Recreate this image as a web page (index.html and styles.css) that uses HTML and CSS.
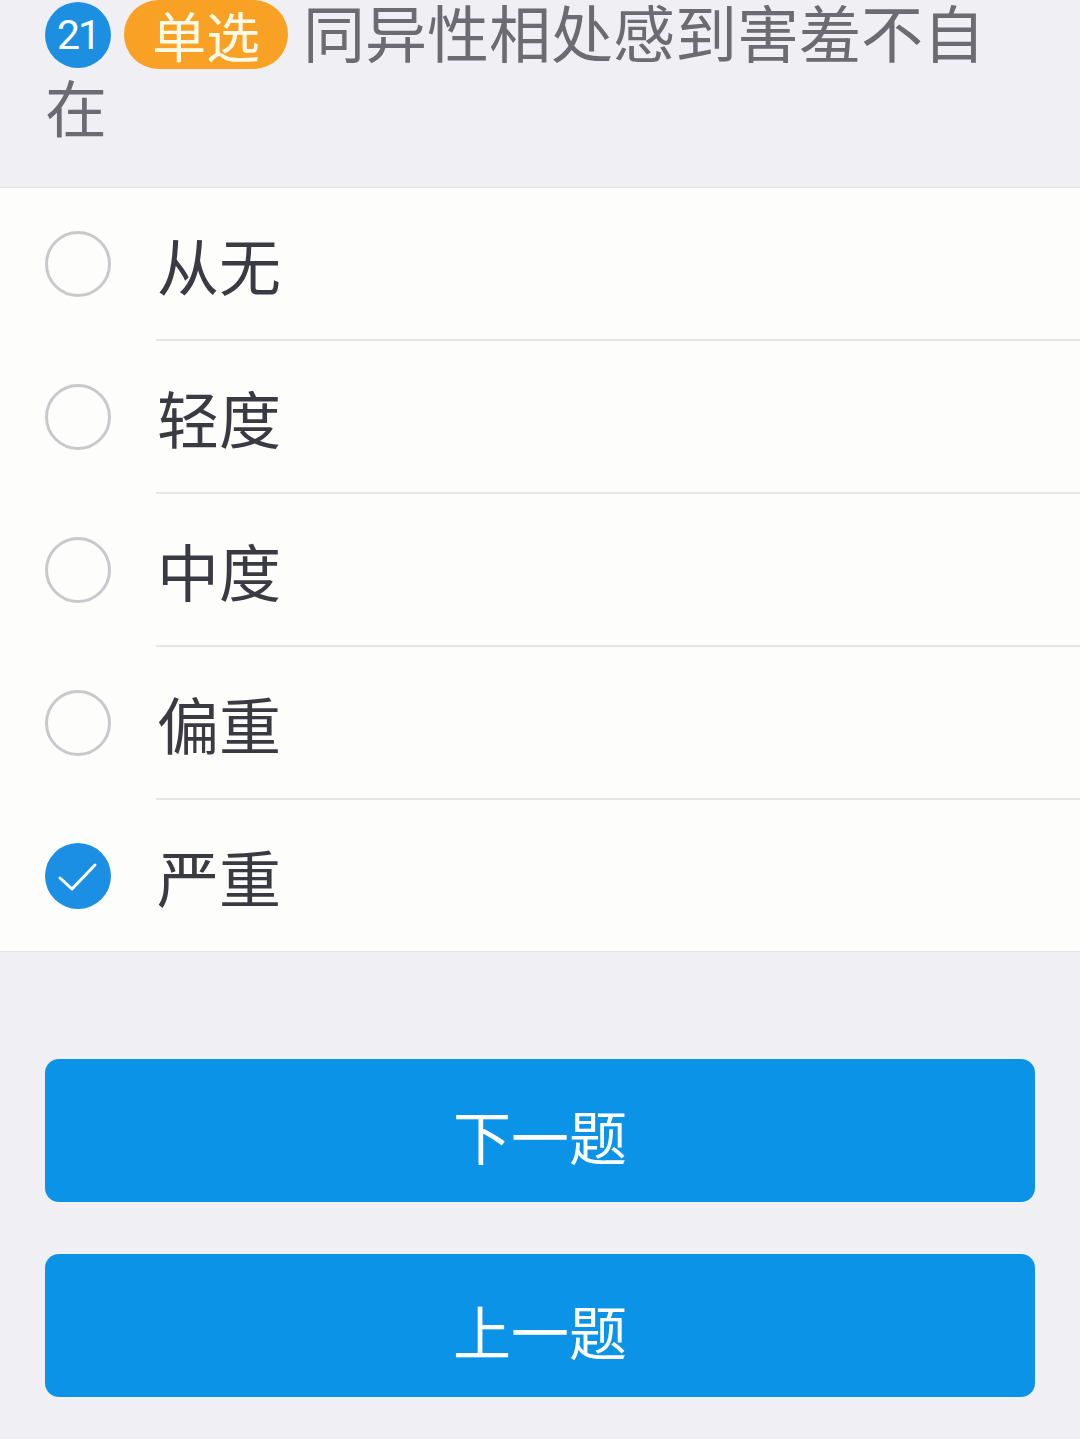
FILE: index.html
```html
<!DOCTYPE html>
<html lang="zh-CN">
<head>
    <meta charset="UTF-8">
    <meta name="viewport" content="width=device-width, initial-scale=1.0">
    <title>问卷</title>
    <link rel="stylesheet" href="styles.css">
</head>
<body>
    <div class="question">
        <span class="num">21</span><span class="tag">单选</span>同异性相处感到害羞不自在
    </div>

    <ul class="options">
        <li class="option">
            <span class="radio"></span>
            <span class="label">从无</span>
        </li>
        <li class="option">
            <span class="radio"></span>
            <span class="label">轻度</span>
        </li>
        <li class="option">
            <span class="radio"></span>
            <span class="label">中度</span>
        </li>
        <li class="option">
            <span class="radio"></span>
            <span class="label">偏重</span>
        </li>
        <li class="option checked">
            <span class="radio">
                <svg viewBox="0 0 66 66" width="66" height="66">
                    <path d="M15 35 L27 46 L50 22" fill="none" stroke="#ffffff" stroke-width="3" stroke-linecap="round" stroke-linejoin="round"/>
                </svg>
            </span>
            <span class="label">严重</span>
        </li>
    </ul>

    <div class="buttons">
        <button class="btn">下一题</button>
        <button class="btn">上一题</button>
    </div>
</body>
</html>
```

FILE: styles.css
```css
body {
    margin: 0;
    background-color: #efeff4;
    font-family: "Noto Sans CJK SC", "Noto Sans", sans-serif;
    overflow: hidden;
}
.question {
    margin-top: -6px;
    padding: 0 45px 43px 45px;
    font-size: 62px;
    line-height: 75px;
    color: #6b6b71;
}
.num {
    display: inline-block;
    width: 66px;
    height: 66px;
    margin-top: 8px;
    margin-right: 13px;
    border-radius: 50%;
    background-color: #1d8fe1;
    color: #ffffff;
    font-family: Roboto, "Noto Sans", sans-serif;
    font-size: 41px;
    line-height: 66px;
    text-align: center;
    letter-spacing: -2px;
    vertical-align: top;
}
.tag {
    display: inline-block;
    height: 69px;
    margin-top: 6px;
    margin-right: 15px;
    padding: 0 28px;
    border-radius: 35px;
    background-color: #f9a124;
    color: #fffbe8;
    font-size: 54px;
    line-height: 69px;
    vertical-align: top;
}
.options {
    list-style: none;
    margin: 0;
    padding: 0;
    background-color: #fdfdfb;
    border-top: 1px solid #e3e3e6;
    border-bottom: 1px solid #e3e3e6;
}
.option {
    display: flex;
    align-items: center;
    height: 151px;
    padding-left: 45px;
}
.option + .option {
    border-top: 2px solid transparent;
    position: relative;
}
.option + .option::before {
    content: "";
    position: absolute;
    left: 156px;
    right: 0;
    top: -2px;
    height: 2px;
    background-color: #e6e6e8;
}
.radio {
    width: 60px;
    height: 60px;
    border: 3px solid #c9c9cd;
    border-radius: 50%;
    flex: none;
    margin-right: 46px;
}
.option.checked .radio {
    width: 66px;
    height: 66px;
    border: none;
    background-color: #1a8fe3;
}
.radio svg {
    display: block;
}
.label {
    font-size: 62px;
    color: #3a3a42;
    line-height: 1;
}
.buttons {
    display: flex;
    flex-direction: column;
    gap: 52px;
    padding: 107px 45px 0 45px;
}
.btn {
    height: 143px;
    padding-top: 10px;
    border: none;
    border-radius: 14px;
    background-color: #0b93e8;
    color: #ffffff;
    font-family: "Noto Sans CJK SC", "Noto Sans", sans-serif;
    font-size: 58px;
    cursor: pointer;
}
```
